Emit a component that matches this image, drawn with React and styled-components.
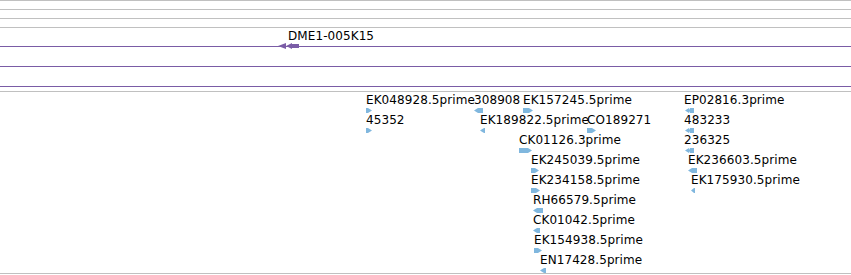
import styled, { createGlobalStyle } from 'styled-components';

const GlobalStyle = createGlobalStyle`
  html, body {
    margin: 0;
    padding: 0;
    background: #ffffff;
  }
  body {
    font-family: "DejaVu Sans", "Liberation Sans", sans-serif;
    color: #000;
  }
`

const GREY = '#c0c0c0'
const PURPLE = '#7a5ca6'
const BLUE = '#80b7de'

const rows = [
  [
    { name: 'EK048928.5prime', x: 366, w: 6, dir: 'r' },
    { name: '308908', x: 474, w: 9, dir: 'l' },
    { name: 'EK157245.5prime', x: 523, w: 10, dir: 'r' },
    { name: 'EP02816.3prime', x: 684, dx: 1, w: 9, dir: 'l', double: true },
  ],
  [
    { name: '45352', x: 366, w: 6, dir: 'r' },
    { name: 'EK189822.5prime', x: 480, w: 5, dir: 'l' },
    { name: 'CO189271', x: 587, w: 9, dir: 'r' },
    { name: '483233', x: 684, dx: 1, w: 9, dir: 'l', double: true },
  ],
  [
    { name: 'CK01126.3prime', x: 519, w: 13, dir: 'r' },
    { name: '236325', x: 684, dx: 1, w: 9, dir: 'l', double: true },
  ],
  [
    { name: 'EK245039.5prime', x: 531, w: 8, dir: 'r' },
    { name: 'EK236603.5prime', x: 688, w: 9, dir: 'l' },
  ],
  [
    { name: 'EK234158.5prime', x: 531, w: 9, dir: 'r' },
    { name: 'EK175930.5prime', x: 691, w: 4, dir: 'l' },
  ],
  [{ name: 'RH66579.5prime', x: 533, w: 10, dir: 'l' }],
  [{ name: 'CK01042.5prime', x: 533, w: 7, dir: 'l' }],
  [{ name: 'EK154938.5prime', x: 534, w: 8, dir: 'r' }],
  [{ name: 'EN17428.5prime', x: 540, w: 6, dir: 'l' }],
]

export default function App() {
  return (
    <>
      <GlobalStyle />
      <Page>
        <Band />
        <Band />
        <Band />
        <CloneTrack>
          <Lane $top={18} />
          <Lane $top={19} />
          <Lane $top={19} />
          <Feature style={{ left: 278, top: 1 }}>
            <Label $indent={10}>DME1-005K15</Label>
            <CloneSvg width="21" height="6" viewBox="0 0 21 6">
              <polygon points="0,3 8,0 8,6" fill={PURPLE} />
              <polygon points="8,3 14,0 14,1 21,1 21,5 14,5 14,6" fill={PURPLE} />
            </CloneSvg>
          </Feature>
        </CloneTrack>
        <EstTrack>
          {rows.map((row, i) =>
            row.map((f) => (
              <Feature key={f.name} style={{ left: f.x, top: 1 + i * 20 }}>
                <Label>{f.name}</Label>
                <Glyph {...f} />
              </Feature>
            ))
          )}
        </EstTrack>
      </Page>
    </>
  )
}

function Glyph({ w, dir, double, dx = 0 }) {
  let pts
  if (double) {
    pts = '0,2.5 4,0 4,2 5,0 9,0 9,5 5,5 4,3 4,5'
  } else if (dir === 'r') {
    const t = Math.min(4, w - 1)
    pts = `0,0 ${w - t},0 ${w},2.5 ${w - t},5 0,5`
  } else {
    const t = Math.min(4, w - 1)
    pts = `0,2.5 ${t},0 ${w},0 ${w},5 ${t},5`
  }
  return (
    <ArrowSvg $dx={dx} width={w} height="5" viewBox={`0 0 ${w} 5`}>
      <polygon points={pts} fill={BLUE} />
    </ArrowSvg>
  )
}

const Page = styled.div`
  width: 851px;
  height: 275px;
  overflow: hidden;
  display: flex;
  flex-direction: column;
`

const Band = styled.div`
  height: 8px;
  border-top: 1px solid ${GREY};
  flex: none;
`

const CloneTrack = styled.div`
  position: relative;
  height: 63px;
  border-top: 1px solid ${GREY};
  flex: none;
  display: flex;
  flex-direction: column;
`

const Lane = styled.div`
  margin-top: ${(p) => p.$top}px;
  border-top: 1px solid ${PURPLE};
  flex: none;
`

const EstTrack = styled.div`
  position: relative;
  height: 181px;
  border-top: 1px solid ${GREY};
  border-bottom: 1px solid ${GREY};
  flex: none;
`

const Feature = styled.div`
  position: absolute;
  display: flex;
  flex-direction: column;
  align-items: flex-start;
`

const Label = styled.span`
  font-size: 12px;
  line-height: 14px;
  letter-spacing: 0.08px;
  white-space: nowrap;
  margin-left: ${(p) => p.$indent || 0}px;
  color: #000;
`

const ArrowSvg = styled.svg`
  display: block;
  margin-top: 1px;
  margin-left: ${(p) => p.$dx}px;
`

const CloneSvg = styled.svg`
  display: block;
`
